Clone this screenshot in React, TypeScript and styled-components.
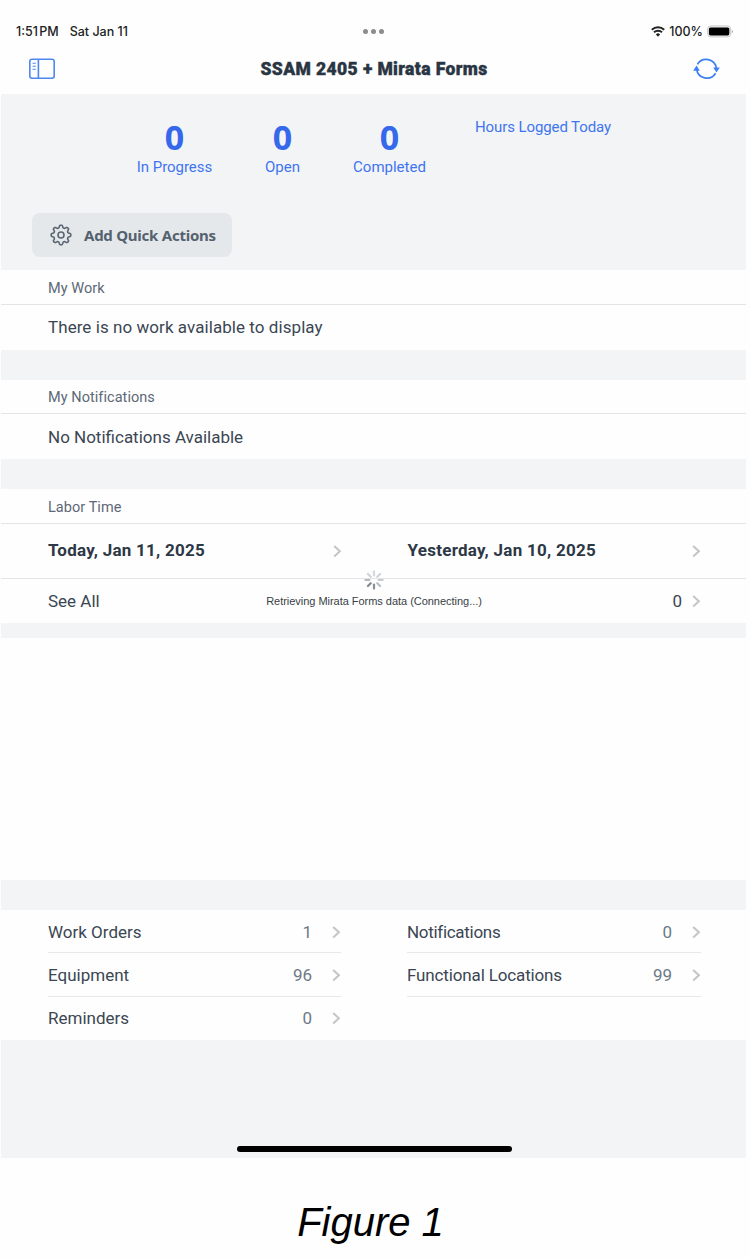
import React from 'react';
import styled, { createGlobalStyle } from 'styled-components';

const GlobalStyle = createGlobalStyle`
  * { box-sizing: border-box; }
  body { margin: 0; background: #fefefe; font-family: Roboto, "Noto Sans", sans-serif; color: #32404f; }
`;

const Page = styled.main`
  width: 750px;
  height: 1258px;
  overflow: hidden;
`;
const Screen = styled.div`
  position: relative;
  width: 745px;
  height: 1158px;
  margin-left: 1px;
  display: flex;
  flex-direction: column;
  background: #f3f4f6;
`;
const StatusBar = styled.header`
  position: relative;
  height: 44px;
  padding: 19px 12px 0 15px;
  display: flex;
  justify-content: space-between;
  align-items: center;
  background: #fefefe;
  color: #222;
  font: 500 12.5px/25px Inter, sans-serif;
`;
const StatusGroup = styled.div<{ $gap: number }>`
  display: flex;
  align-items: center;
  gap: ${(p) => p.$gap}px;
`;
const StatusText = styled.span<{ $track?: number; $word?: number }>`
  letter-spacing: ${(p) => p.$track ?? 0}px;
  word-spacing: ${(p) => p.$word ?? 0}px;
  white-space: pre;
`;
const Dots = styled.div`
  position: absolute;
  left: 362px;
  top: 29px;
  display: flex;
  gap: 3px;
  i { width: 5px; height: 5px; border-radius: 50%; background: #8b8b8b; }
`;
const NavBar = styled.nav`
  height: 50px;
  padding: 0 26px 0 27px;
  display: flex;
  align-items: center;
  justify-content: space-between;
  background: #fefefe;
`;
const Title = styled.h1`
  margin: 0;
  font: 900 17.5px/24px Roboto, sans-serif;
  letter-spacing: 0.4px;
  -webkit-text-stroke: 0.4px #2a3543;
  color: #2a3543;
`;
const Overview = styled.section`
  height: 176px;
  padding-left: 31px;
`;
const Stats = styled.div`
  height: 119px;
  padding: 25px 0 0 88px;
  display: flex;
`;
const Stat = styled.div<{ $width: number }>`
  width: ${(p) => p.$width}px;
  text-align: center;
  color: #3568ea;
`;
const StatValue = styled.div`
  font: 700 34px/37px "Noto Sans", sans-serif;
  height: 38px;
`;
const StatLabel = styled.div<{ $track?: number }>`
  font-size: 15px;
  line-height: 20px;
  letter-spacing: ${(p) => p.$track ?? 0}px;
  color: #3f74f0;
  white-space: nowrap;
`;
const Hours = styled.div`
  padding-left: 32px;
  margin-top: -2px;
`;
const QuickButton = styled.button`
  width: 200px;
  height: 44px;
  padding: 0 0 0 18px;
  display: flex;
  align-items: center;
  gap: 12px;
  border: 0;
  border-radius: 8px;
  background: #e5e8eb;
  color: #54616e;
  font: 700 15px/20px "Noto Sans", sans-serif;
  letter-spacing: -0.25px;
`;
const Card = styled.section<{ $gap: number }>`
  margin-bottom: ${(p) => p.$gap}px;
  background: #fefefe;
`;
const CardHeader = styled.h2<{ $height: number }>`
  margin: 0;
  height: ${(p) => p.$height}px;
  padding-left: 47px;
  border-bottom: 1px solid #e3e5e9;
  font-size: 14.5px;
  font-weight: 400;
  line-height: ${(p) => (p.$height === 35 ? 37 : 36)}px;
  letter-spacing: 0.05px;
  color: #5d6877;
`;
const CardRow = styled.div<{ $height: number; $line?: boolean }>`
  height: ${(p) => p.$height}px;
  padding-left: 47px;
  display: flex;
  align-items: center;
  border-bottom: ${(p) => (p.$line ? '1px solid #e3e5e9' : '0')};
`;
const Cell = styled.div<{ $end: number }>`
  flex: 1;
  display: flex;
  align-items: center;
  padding-right: ${(p) => p.$end}px;
`;
const Label = styled.span<{ $bold?: boolean; $track?: number; $raised?: boolean }>`
  flex: 1;
  padding-bottom: ${(p) => (p.$raised ? 2 : 0)}px;
  font-size: 17px;
  line-height: 22px;
  font-weight: ${(p) => (p.$bold ? 700 : 400)};
  letter-spacing: ${(p) => p.$track ?? 0}px;
  color: ${(p) => (p.$bold ? '#2d3846' : '#3b4653')};
`;
const Count = styled.span<{ $gap: number; $dark?: boolean }>`
  margin-right: ${(p) => p.$gap}px;
  font-size: 17px;
  line-height: 22px;
  color: ${(p) => (p.$dark ? '#3b4653' : '#6c7987')};
`;
const Blank = styled.section`
  height: 242px;
  margin-bottom: 30px;
  background: #fefefe;
`;
const Links = styled.section`
  height: 130px;
  padding: 0 45px 0 47px;
  display: grid;
  grid-template-columns: 293px 294px;
  justify-content: space-between;
  background: #fefefe;
`;
const LinkRow = styled.div<{ $line?: boolean }>`
  height: 43.3px;
  padding-top: 1px;
  display: flex;
  align-items: center;
  border-bottom: 1px solid ${(p) => (p.$line ? '#e7e8ea' : 'transparent')};
`;
const Loading = styled.div`
  position: absolute;
  top: 570px;
  left: 0;
  width: 746px;
  display: flex;
  flex-direction: column;
  align-items: center;
  font: 400 11px/16px "Liberation Sans", sans-serif;
  color: #383e45;
  span { margin-top: 3px; letter-spacing: -0.03px; }
`;
const HomeBar = styled.div`
  position: absolute;
  left: 236px;
  top: 1146px;
  width: 275px;
  height: 6px;
  border-radius: 3px;
  background: #000;
`;
const Caption = styled.p`
  margin: 39px 0 0;
  width: 741px;
  text-align: center;
  font: italic 40px/50px "Liberation Sans", sans-serif;
  color: #000;
`;

const Chevron = () => (
  <svg width="9" height="14" viewBox="0 0 9 14" fill="none" stroke="#c3c5c8" strokeWidth="2">
    <path d="M1.2 2 6.9 7.3l-5.7 5.3" />
  </svg>
);
const PanelIcon = () => (
  <svg width="27" height="22" viewBox="0 0 27 22" fill="none" stroke="#4d88ee" strokeWidth="1.6">
    <rect x="1.8" y="1.3" width="24.4" height="19" rx="2.2" />
    <path d="M10.4 1.3v19" />
    <path d="M4.6 5.3h3.2M4.6 8.3h3.2M4.6 11.3h3.2" strokeWidth="1.1" />
  </svg>
);
const SyncIcon = () => (
  <svg width="27" height="24" viewBox="0 0 27 24" fill="none" stroke="#3c80f4" strokeWidth="1.7">
    <path d="M4.4 7.4a10.3 10.3 0 0 1 19 4M22.6 16.2a10.3 10.3 0 0 1-19-4" />
    <path d="M0.2 13.8 3.5 8.6l3.3 5.2zM20.2 10.6h6.6l-3.3 5z" fill="#3c80f4" stroke="none" />
  </svg>
);
const WifiIcon = () => (
  <svg width="14" height="11" viewBox="0 0 14 11" fill="none" stroke="#222" strokeWidth="1.9">
    <path d="M.8 3.8a9 9 0 0 1 12.4 0M3 6.3a5.8 5.8 0 0 1 8 0" />
    <path d="M4.9 8.4a3 3 0 0 1 4.2 0L7 10.8z" fill="#222" stroke="none" />
  </svg>
);
const BatteryIcon = () => (
  <svg width="27" height="13" viewBox="0 0 27 13">
    <rect x=".6" y=".9" width="23" height="11" rx="3" fill="#eee" stroke="#ccc" strokeWidth="1" />
    <rect x="1.9" y="2.4" width="20.4" height="8" rx="1.6" fill="#000" />
    <path d="M24.8 4.8c1.3.5 1.3 2.9 0 3.4z" fill="#999" />
  </svg>
);

const gearPoints = (() => {
  const steps = 96;
  return Array.from({ length: steps }, (_, i) => {
    const a = (i / steps) * Math.PI * 2;
    const r = 8.6 + 1.25 * Math.tanh(2.2 * Math.cos(8 * a));
    return `${(11 + r * Math.sin(a)).toFixed(2)},${(11 - r * Math.cos(a)).toFixed(2)}`;
  }).join(' ');
})();
const GearIcon = () => (
  <svg width="22" height="22" viewBox="0 0 22 22" fill="none" stroke="#5a6672" strokeWidth="1.6" strokeLinejoin="round">
    <polygon points={gearPoints} />
    <circle cx="11" cy="11" r="3" />
  </svg>
);
const spokes = ['#d5d9dd', '#d0d4d8', '#c6cace', '#b9bdc1', '#8b9095', '#858a90', '#b4b8bc', '#d0d3d7'];
const Spinner = () => (
  <svg width="20" height="20" viewBox="-10 -10 20 20" strokeWidth="2.2" strokeLinecap="round">
    {spokes.map((c, i) => (
      <path key={i} d="M0-4.6V-8.6" stroke={c} transform={`rotate(${i * 45})`} />
    ))}
  </svg>
);

const Link = ({ name, count, line, track }: { name: string; count: number; line?: boolean; track?: number }) => (
  <LinkRow $line={line}>
    <Label $track={track}>{name}</Label>
    <Count $gap={20}>{count}</Count>
    <Chevron />
  </LinkRow>
);

export default function App() {
  return (
    <Page>
      <GlobalStyle />
      <Screen>
        <StatusBar>
          <StatusGroup $gap={11}>
            <StatusText $word={-2}>1:51 PM</StatusText>
            <StatusText>Sat Jan 11</StatusText>
          </StatusGroup>
          <Dots><i /><i /><i /></Dots>
          <StatusGroup $gap={4}>
            <WifiIcon />
            <StatusText>100%</StatusText>
            <BatteryIcon />
          </StatusGroup>
        </StatusBar>
        <NavBar>
          <PanelIcon />
          <Title>SSAM 2405 + Mirata Forms</Title>
          <SyncIcon />
        </NavBar>
        <Overview>
          <Stats>
            <Stat $width={109}><StatValue>0</StatValue><StatLabel $track={-0.05}>In Progress</StatLabel></Stat>
            <Stat $width={107}><StatValue>0</StatValue><StatLabel>Open</StatLabel></Stat>
            <Stat $width={107}><StatValue>0</StatValue><StatLabel>Completed</StatLabel></Stat>
            <Hours><StatLabel $track={-0.1}>Hours Logged Today</StatLabel></Hours>
          </Stats>
          <QuickButton><GearIcon />Add Quick Actions</QuickButton>
        </Overview>
        <Card $gap={30}>
          <CardHeader $height={35}>My Work</CardHeader>
          <CardRow $height={45}><Label $raised $track={0.06}>There is no work available to display</Label></CardRow>
        </Card>
        <Card $gap={30}>
          <CardHeader $height={34}>My Notifications</CardHeader>
          <CardRow $height={45}><Label>No Notifications Available</Label></CardRow>
        </Card>
        <Card $gap={15}>
          <CardHeader $height={35}>Labor Time</CardHeader>
          <CardRow $height={55} $line>
            <Cell $end={66}><Label $bold $raised $track={0.25}>Today, Jan 11, 2025</Label><Chevron /></Cell>
            <Cell $end={45}><Label $bold $raised $track={0.26}>Yesterday, Jan 10, 2025</Label><Chevron /></Cell>
          </CardRow>
          <CardRow $height={44}>
            <Cell $end={45}><Label>See All</Label><Count $gap={10} $dark>0</Count><Chevron /></Cell>
          </CardRow>
        </Card>
        <Blank />
        <Links>
          <div>
            <Link name="Work Orders" count={1} line />
            <Link name="Equipment" count={96} line />
            <Link name="Reminders" count={0} />
          </div>
          <div>
            <Link name="Notifications" count={0} line track={-0.3} />
            <Link name="Functional Locations" count={99} line track={-0.14} />
          </div>
        </Links>
        <Loading><Spinner /><span>Retrieving Mirata Forms data (Connecting...)</span></Loading>
        <HomeBar />
      </Screen>
      <Caption>Figure 1</Caption>
    </Page>
  );
}
